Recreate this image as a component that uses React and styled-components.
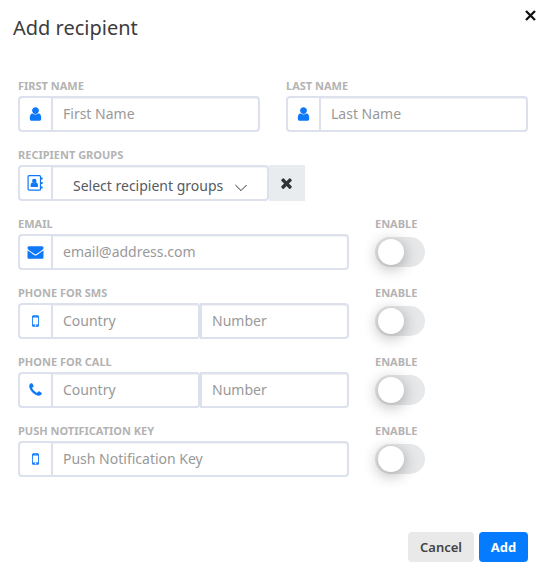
import React from "react";
import styled, { createGlobalStyle, css } from "styled-components";

const GlobalStyle = createGlobalStyle`
  *, *::before, *::after { box-sizing: border-box; }
  body {
    margin: 0;
    background: #fff;
    color: #333;
    font: 14px/20px "Noto Sans", sans-serif;
  }
  button, input { font: inherit; }
`;

const Dialog = styled.div`
  display: flex;
  flex-direction: column;
  height: 580px;
  background: #fff;
`;

const Header = styled.header`
  display: flex;
  justify-content: space-between;
  align-items: flex-start;
  height: 78px;
  padding: 8px 9px 0 13px;
`;

const Title = styled.h1`
  margin: 5px 0 0;
  font-size: 20px;
  line-height: 30px;
  font-weight: 400;
  color: #3c3c3c;
`;

const CloseButton = styled.button`
  display: flex;
  margin-top: 1px;
  padding: 0;
  border: 0;
  background: none;
  color: #111;
`;

const Form = styled.form`
  display: flex;
  flex-direction: column;
  flex: 1;
  padding: 0 18px;
`;

const Row = styled.div`
  display: flex;
  gap: 26px;
  height: 69px;
`;

const Field = styled.div`
  display: flex;
  flex-direction: column;
  width: ${(p) => p.$width}px;
`;

const Label = styled.label`
  height: 18px;
  font-size: 11px;
  line-height: 15px;
  font-weight: 700;
  color: #b3b3b3;
  white-space: nowrap;
`;

const InputGroup = styled.div`
  display: flex;
  height: 36px;
`;

const box = css`
  border: 2px solid #dde1ee;
  height: 36px;
  background: #fff;
`;

const Addon = styled.span`
  ${box}
  display: flex;
  align-items: center;
  justify-content: center;
  flex: 0 0 33px;
  border-right: 0;
  border-radius: 4px 0 0 4px;
  color: #0d78f8;
`;

const Input = styled.input`
  ${box}
  flex: ${(p) => (p.$width ? `0 0 ${p.$width}px` : "1")};
  min-width: 0;
  margin: 0;
  padding: 0 10px 1px;
  border-radius: ${(p) => (p.$last ? "0 4px 4px 0" : "0 3px 3px 0")};
  box-shadow: inset 0 1px 1px rgba(0, 0, 0, 0.06);
  outline: 0;
  &::placeholder { color: #999; opacity: 1; }
`;

const Select = styled.div`
  ${box}
  display: flex;
  align-items: center;
  gap: 12px;
  flex: 0 0 218px;
  padding: 5px 0 0 20px;
  border-radius: 0 4px 4px 0;
  box-shadow: inset 0 1px 1px rgba(0, 0, 0, 0.06);
  color: #555b63;
`;

const ClearButton = styled.button`
  display: flex;
  align-items: center;
  justify-content: center;
  width: 36px;
  padding: 0 1px 0 0;
  border: 0;
  background: #e9ecef;
  color: #333;
`;

const Toggle = styled.button`
  display: flex;
  align-items: center;
  width: 50px;
  height: 30px;
  margin-top: 3px;
  padding: 0 3px;
  border: 0;
  border-radius: 15px;
  background: #e7e8ea;
`;

const Knob = styled.span`
  width: 26px;
  height: 26px;
  border-radius: 50%;
  background: #fff;
  box-shadow: 0 3px 15px rgba(0, 0, 0, 0.33);
`;

const Footer = styled.footer`
  display: flex;
  justify-content: flex-end;
  gap: 5px;
  padding: 0 18px 18px;
`;

const Button = styled.button`
  width: ${(p) => (p.$primary ? 49 : 66)}px;
  height: 30px;
  padding: 0;
  border: 0;
  border-radius: 4px;
  background: ${(p) => (p.$primary ? "#057cff" : "#e9e9e9")};
  color: ${(p) => (p.$primary ? "#fff" : "#444")};
  font-size: 13px;
  line-height: 30px;
  font-weight: ${(p) => (p.$primary ? 700 : 600)};
`;

const paths = {
  user: "M1536 1399q0 109-62.5 187t-150.5 78h-854q-88 0-150.5-78t-62.5-187q0-85 8.5-160.5t31.5-152 58.5-131 94-89 134.5-34.5q131 128 313 128t313-128q76 0 134.5 34.5t94 89 58.5 131 31.5 152 8.5 160.5zm-256-887q0 159-112.5 271.5t-271.5 112.5-271.5-112.5-112.5-271.5 112.5-271.5 271.5-112.5 271.5 112.5 112.5 271.5z",
  envelope: "M1792 710v794q0 66-47 113t-113 47h-1472q-66 0-113-47t-47-113v-794q44 49 101 87 362 246 497 345 57 42 92.5 65.5t94.5 48 110 24.5h2q51 0 110-24.5t94.5-48 92.5-65.5q170-123 498-345 57-39 100-87zm0-294q0 79-49 151t-122 123q-376 261-468 325-10 7-42.5 31t-54 38.5-52 32.5-57.5 27-50 9h-2q-23 0-50-9t-57.5-27-52-32.5-54-38.5-42.5-31q-91-64-262-182.5t-205-142.5q-62-42-117-115.5t-55-136.5q0-78 41.5-130t118.5-52h1472q65 0 112.5 47t47.5 113z",
  phone: "M1600 1240q0 27-10 70.5t-21 68.5q-21 50-122 106-94 51-186 51-27 0-53-3.5t-57.5-12.5-47-14.5-55.5-20.5-49-18q-98-35-175-83-127-79-264-216t-216-264q-48-77-83-175-3-9-18-49t-20.5-55.5-14.5-47-12.5-57.5-3.5-53q0-92 51-186 56-101 106-122 25-11 68.5-21t70.5-10q14 0 21 3 18 6 53 76 11 19 30 54t35 63.5 31 53.5q3 4 17.5 25t21.5 35.5 7 28.5q0 20-28.5 50t-62 55-62 53-28.5 46q0 9 5 22.5t8.5 20.5 14 24 11.5 19q76 137 174 235t235 174q2 1 19 11.5t24 14 20.5 8.5 22.5 5q18 0 46-28.5t53-62 55-62 50-28.5q14 0 28.5 7t35.5 21.5 25 17.5q25 15 53.5 31t63.5 35 54 30q70 35 76 53 3 7 3 21z",
  mobile: "M976 1408q0-33-23.5-56.5t-56.5-23.5-56.5 23.5-23.5 56.5 23.5 56.5 56.5 23.5 56.5-23.5 23.5-56.5zm208-160v-704q0-13-9.5-22.5t-22.5-9.5h-512q-13 0-22.5 9.5t-9.5 22.5v704q0 13 9.5 22.5t22.5 9.5h512q13 0 22.5-9.5t9.5-22.5zm-192-848q0-16-16-16h-160q-16 0-16 16t16 16h160q16 0 16-16zm288-16v1024q0 52-38 90t-90 38h-512q-52 0-90-38t-38-90v-1024q0-52 38-90t90-38h512q52 0 90 38t38 90z",
  close: "M1490 1322q0 40-28 68l-136 136q-28 28-68 28t-68-28l-294-294-294 294q-28 28-68 28t-68-28l-136-136q-28-28-28-68t28-68l294-294-294-294q-28-28-28-68t28-68l136-136q28-28 68-28t68 28l294 294 294-294q28-28 68-28t68 28l136 136q28 28 28 68t-28 68l-294 294 294 294q28 28 28 68z",
};

const Icon = ({ name, size = 16 }) => (
  <svg width={size + 1} height={size} viewBox="-56 0 1904 1792" fill="currentColor" aria-hidden="true">
    <path d={paths[name]} />
  </svg>
);

const DismissIcon = () => (
  <svg width="13" height="13" viewBox="0 0 13 13" fill="none" stroke="currentColor" strokeWidth="2.3" aria-hidden="true">
    <path d="M2 2l9 9M11 2l-9 9" />
  </svg>
);

const AddressBookIcon = () => (
  <svg width="17" height="16" viewBox="0 0 17 16" fill="currentColor" aria-hidden="true">
    <rect x="1.1" y="0.6" width="12.4" height="14.6" rx="1" fill="none" stroke="currentColor" strokeWidth="1.2" />
    <circle cx="7.3" cy="5.9" r="2.2" />
    <path d="M3.6 10.9c0-2 .7-3.100 1.900-3.300 1.100.8 2.500.8 3.600 0 1.200.2 1.900 1.300 1.900 3.300 0 .8-.5 1.200-1.100 1.200H4.700c-.6 0-1.100-.4-1.100-1.200z" />
    <path d="M14 2.500h1.600v2H14zM14 7h1.600v2H14zM14 11.500h1.600v2H14z" />
  </svg>
);

const ChevronSvg = styled.svg`
  margin-top: 5px;
`;

const Chevron = () => (
  <ChevronSvg width="12" height="8" viewBox="0 0 12 8" fill="none" stroke="#333" strokeWidth="1" aria-hidden="true">
    <path d="M0.400 1l5.600 5.600L11.600 1" />
  </ChevronSvg>
);

const EnableField = () => (
  <Field $width={50}>
    <Label>ENABLE</Label>
    <Toggle type="button" role="switch" aria-checked="false" aria-label="Enable">
      <Knob />
    </Toggle>
  </Field>
);

const TextField = ({ label, icon, width, placeholder }) => (
  <Field $width={width}>
    <Label>{label}</Label>
    <InputGroup>
      <Addon><Icon name={icon} /></Addon>
      <Input placeholder={placeholder} $last />
    </InputGroup>
  </Field>
);

const PhoneField = ({ label, icon }) => (
  <Field $width={331}>
    <Label>{label}</Label>
    <InputGroup>
      <Addon><Icon name={icon} /></Addon>
      <Input placeholder="Country" $width={149} />
      <Input placeholder="Number" $last />
    </InputGroup>
  </Field>
);

export default function App() {
  return (
    <>
      <GlobalStyle />
      <Dialog>
        <Header>
          <Title>Add recipient</Title>
          <CloseButton type="button" aria-label="Close"><DismissIcon /></CloseButton>
        </Header>
        <Form>
          <Row>
            <TextField label="FIRST NAME" icon="user" width={242} placeholder="First Name" />
            <TextField label="LAST NAME" icon="user" width={242} placeholder="Last Name" />
          </Row>
          <Row>
            <Field $width={287}>
              <Label>RECIPIENT GROUPS</Label>
              <InputGroup>
                <Addon><AddressBookIcon /></Addon>
                <Select>Select recipient groups<Chevron /></Select>
                <ClearButton type="button" aria-label="Clear"><Icon name="close" /></ClearButton>
              </InputGroup>
            </Field>
          </Row>
          <Row>
            <TextField label="EMAIL" icon="envelope" width={331} placeholder="email@address.com" />
            <EnableField />
          </Row>
          <Row>
            <PhoneField label="PHONE FOR SMS" icon="mobile" />
            <EnableField />
          </Row>
          <Row>
            <PhoneField label="PHONE FOR CALL" icon="phone" />
            <EnableField />
          </Row>
          <Row>
            <TextField label="PUSH NOTIFICATION KEY" icon="mobile" width={331} placeholder="Push Notification Key" />
            <EnableField />
          </Row>
        </Form>
        <Footer>
          <Button type="button">Cancel</Button>
          <Button type="button" $primary>Add</Button>
        </Footer>
      </Dialog>
    </>
  );
}
